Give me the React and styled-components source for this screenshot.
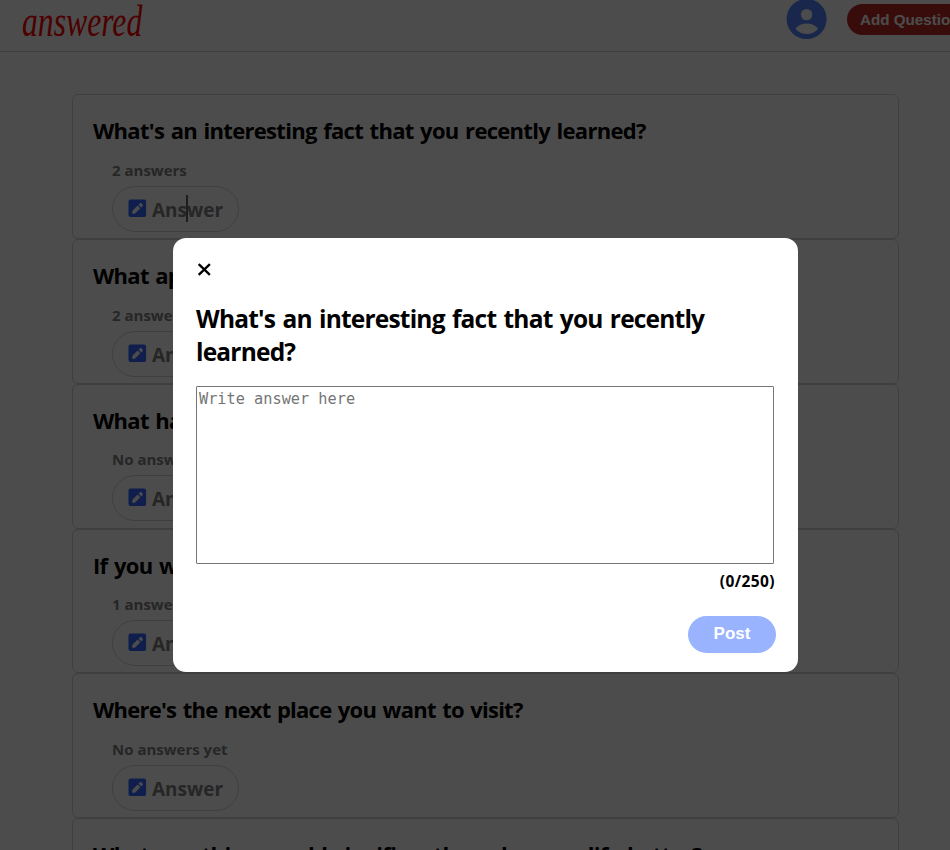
import React from 'react';
import styled, { createGlobalStyle } from 'styled-components';

const Global = createGlobalStyle`
  * { box-sizing: border-box; }
  html, body { margin: 0; background: #fff; overflow: hidden; }
  body { font-family: 'Open Sans', 'Noto Sans', sans-serif; color: #000; }
  h2, p { margin: 0; }
`;

const Page = styled.div`
  height: 850px;
  width: 950px;
  overflow: hidden;
`;

const Header = styled.header`
  height: 52px;
  display: flex;
  align-items: flex-start;
  border-bottom: 1px solid lightgray;
`;

const Logo = styled.div`
  width: 120px;
  margin: -8px 0 0 22px;
  font: italic 400 44px/60px 'Liberation Serif', serif;
  color: red;
  white-space: nowrap;
  transform: scaleX(0.72);
  transform-origin: 0 0;
`;

const HeaderActions = styled.div`
  display: flex;
  align-items: flex-start;
  margin-left: 644px;
  flex: none;
`;

const Avatar = styled.svg`
  display: block;
  width: 42px;
  height: 40px;
`;

const AddButton = styled.button`
  flex: none;
  width: 130px;
  height: 31px;
  margin: 4px 0 0 19px;
  padding: 0 0 0 13px;
  border: 0;
  border-radius: 16px;
  background: #b92b27;
  color: #fff;
  text-align: left;
  white-space: nowrap;
  font: 700 15.2px/32px 'Liberation Sans', sans-serif;
`;

const List = styled.main`
  width: 827px;
  margin: 42.4px 0 0 72px;
`;

const Card = styled.article`
  height: 144.76px;
  border: 1px solid lightgray;
  border-radius: 6px;
  padding: 19px 0 0 20px;
  display: flex;
  flex-direction: column;
  align-items: flex-start;
`;

const Question = styled.h2`
  font-size: 22px;
  font-weight: 700;
  line-height: 32px;
  letter-spacing: ${(p) => p.$spacing ?? '-0.7px'};
  word-spacing: 1.5px;
  white-space: nowrap;
`;

const AnswerCount = styled.p`
  margin: 12.4px 0 0 19px;
  font-size: 15px;
  font-weight: 700;
  line-height: 22px;
  color: gray;
`;

const AnswerButton = styled.button`
  width: 127px;
  height: 46px;
  margin: 5px 0 0 19px;
  padding: 0 0 0 15px;
  display: flex;
  align-items: center;
  gap: 5px;
  border: 1px solid lightgray;
  border-radius: 23px;
  background: transparent;
  color: gray;
  font: 700 19px/44px 'Open Sans', sans-serif;
`;

const ButtonLabel = styled.span`
  padding-top: 2px;
`;

const PenIcon = styled.svg`
  width: 19px;
  height: 19px;
  margin-top: -1px;
  flex: none;
`;

const Backdrop = styled.div`
  position: fixed;
  inset: 0;
  background: rgba(0, 0, 0, 0.7);
`;

const TextCursor = styled.div`
  position: absolute;
  left: 186px;
  top: 195px;
  width: 2px;
  height: 27px;
  background: #1e1e1e;
`;

const Dialog = styled.section`
  position: absolute;
  left: 173px;
  top: 238px;
  width: 625px;
  height: 434px;
  padding: 0 23px;
  border-radius: 13px;
  background: #fff;
  display: flex;
  flex-direction: column;
`;

const CloseButton = styled.button`
  width: 17px;
  height: 17px;
  margin: 23px 0 0;
  padding: 0;
  border: 0;
  background: none;
  svg { display: block; }
`;

const DialogTitle = styled.h2`
  margin-top: 24px;
  font-size: 24.5px;
  font-weight: 700;
  line-height: 33px;
  letter-spacing: -0.8px;
  word-spacing: 1.7px;
`;

const AnswerInput = styled.textarea`
  display: block;
  width: 578px;
  height: 178px;
  margin: 18px 0 0;
  padding: 3px 2px 2px;
  border: 1px solid #767676;
  border-radius: 1px;
  resize: none;
  font: 15.25px/19px 'DejaVu Sans Mono', monospace;
  &::placeholder { color: #757575; }
`;

const Counter = styled.p`
  align-self: flex-end;
  margin-top: 6px;
  font-size: 15.5px;
  font-weight: 700;
  line-height: 22px;
  letter-spacing: 0.4px;
`;

const PostButton = styled.button`
  align-self: flex-end;
  width: 88px;
  height: 37px;
  margin: 24px -1px 0 0;
  padding: 0 0 2px;
  border: 0;
  border-radius: 19px;
  background: #99b3ff;
  color: #fff;
  font: 700 17px/35px 'Liberation Sans', sans-serif;
`;

const questions = [
  { text: "What's an interesting fact that you recently learned?", count: '2 answers' },
  { text: 'What app do you use the most?', count: '2 answers' },
  { text: 'What habit would you like to start?', count: 'No answers yet' },
  { text: 'If you won the lottery, what would you do?', count: '1 answer' },
  {
    text: "Where's the next place you want to visit?",
    count: 'No answers yet',
    spacing: '-0.76px',
  },
  {
    text: 'What one thing would significantly make your life better?',
    count: 'No answers yet',
    spacing: '-0.6px',
  },
];

function Pen() {
  return (
    <PenIcon viewBox="0 0 19 19">
      <rect x="0.5" y="0.5" width="17.6" height="17.6" rx="2" fill="#3366ff" />
      <path
        d="M4.200 14.700v-2.700l5.400-5.400 2.700 2.700-5.400 5.400zM10.500 5.700l1.400-1.400c.5-.5 1.100-.5 1.600 0l1.100 1.100c.5.5.5 1.100 0 1.600l-1.400 1.400z"
        fill="#fff"
      />
    </PenIcon>
  );
}

export default function App() {
  return (
    <Page>
      <Global />
      <Header>
        <Logo>answered</Logo>
        <HeaderActions>
          <Avatar viewBox="0 0 42 40">
            <circle cx="20.6" cy="19" r="20" fill="#5082fa" />
            <circle cx="20.6" cy="14.6" r="5.7" fill="#fff" />
            <path d="M9.4 28.8c2.7-3.5 7-5.3 11.400-5.300s8.700 1.800 11.400 5.300c-2.800 3.600-7 5.300-11.400 5.300s-8.600-1.700-11.400-5.300z" fill="#fff" />
          </Avatar>
          <AddButton>Add Question</AddButton>
        </HeaderActions>
      </Header>
      <List>
        {questions.map((q) => (
          <Card key={q.text}>
            <Question $spacing={q.spacing}>{q.text}</Question>
            <AnswerCount>{q.count}</AnswerCount>
            <AnswerButton>
              <Pen />
              <ButtonLabel>Answer</ButtonLabel>
            </AnswerButton>
          </Card>
        ))}
      </List>
      <Backdrop>
        <TextCursor />
        <Dialog>
          <CloseButton aria-label="Close">
            <svg width="17" height="17" viewBox="0 0 17 17">
              <path d="M2.700 3.100l11.200 10.800M13.900 3.100L2.700 13.900" stroke="#000" strokeWidth="2.3" fill="none" />
            </svg>
          </CloseButton>
          <DialogTitle>What's an interesting fact that you recently learned?</DialogTitle>
          <AnswerInput placeholder="Write answer here" />
          <Counter>(0/250)</Counter>
          <PostButton>Post</PostButton>
        </Dialog>
      </Backdrop>
    </Page>
  );
}
